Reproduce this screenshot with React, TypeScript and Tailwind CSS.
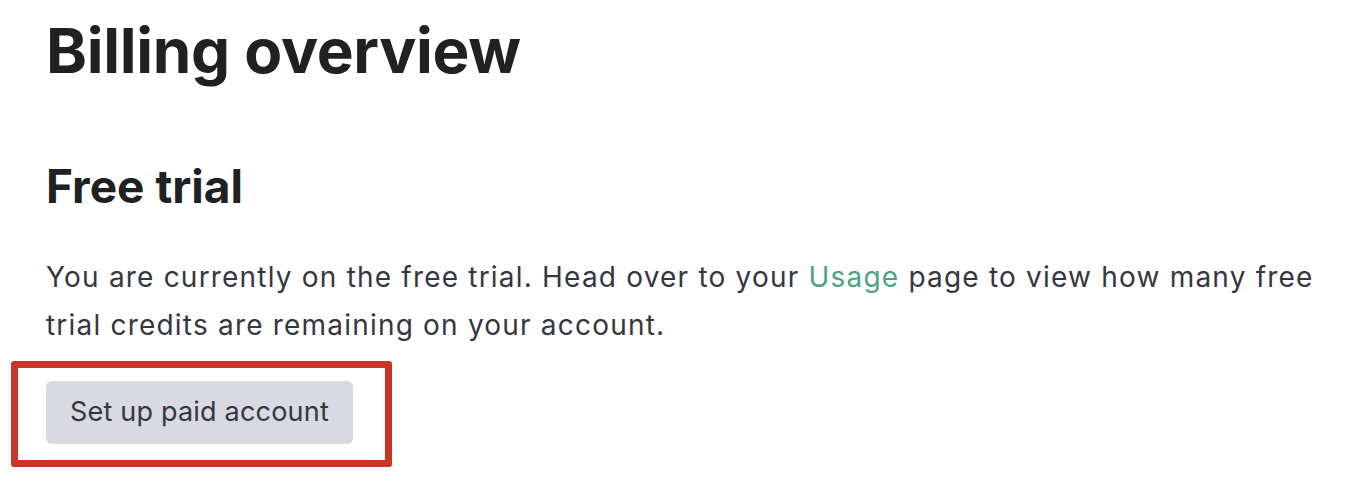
export default function App() {
  return (
    <div className="min-h-[492px] w-[1372px] bg-white pl-[46px] pt-[14px] font-['Inter',sans-serif] text-[#202123]">
      <h1 className="text-[62px] font-bold leading-[74px] tracking-[-0.3px]">Billing overview</h1>

      <h2 className="mt-[70px] text-[46px] font-bold leading-[56px]">Free trial</h2>

      <p className="mt-[39px] w-[1290px] text-[28px] leading-[48px] tracking-[1.2px] text-[#353740]">
        You are currently on the free trial. Head over to your{" "}
        <a href="#" className="text-[#4aa383]">
          Usage
        </a>{" "}
        page to view how many free trial credits are remaining on your account.
      </p>

      <div className="relative mt-[32px] inline-block">
        <button className="h-[63px] rounded-[6px] bg-[#d9d9e3] px-[24px] text-[27px] tracking-[0.2px] text-[#353740]">
          Set up paid account
        </button>
        {/* annotation box */}
        <div className="pointer-events-none absolute -left-[35px] -right-[39px] -top-[20px] -bottom-[23px] rounded-[3px] border-[7px] border-[#c93426]" />
      </div>
    </div>
  );
}
